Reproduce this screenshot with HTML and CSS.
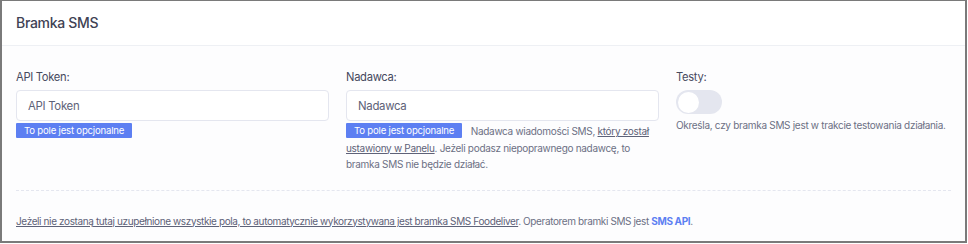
FILE: index.html
```html
<!DOCTYPE html>
<html lang="pl">
<head>
    <meta charset="UTF-8">
    <title>Bramka SMS</title>
    <link rel="stylesheet" href="styles.css">
</head>
<body>
    <div class="card">
        <div class="card-header">
            <h3>Bramka SMS</h3>
        </div>
        <div class="card-body">
            <div class="form-row">
                <div class="form-group">
                    <label>API Token:</label>
                    <input type="text" class="form-control" placeholder="API Token">
                    <div class="form-help">
                        <span class="badge">To pole jest opcjonalne</span>
                    </div>
                </div>
                <div class="form-group">
                    <label>Nadawca:</label>
                    <input type="text" class="form-control" placeholder="Nadawca">
                    <div class="form-help">
                        <span class="badge">To pole jest opcjonalne</span>
                        Nadawca wiadomości SMS, <u>który został ustawiony w Panelu</u>. Jeżeli podasz niepoprawnego nadawcę, to bramka SMS nie będzie działać.
                    </div>
                </div>
                <div class="form-group">
                    <label>Testy:</label>
                    <label class="switch">
                        <input type="checkbox">
                        <span class="knob"></span>
                    </label>
                    <div class="form-help">Określa, czy bramka SMS jest w trakcie testowania działania.</div>
                </div>
            </div>
            <div class="separator"></div>
            <p class="footer-note"><u>Jeżeli nie zostaną tutaj uzupełnione wszystkie pola, to automatycznie wykorzystywana jest bramka SMS Foodeliver</u>. Operatorem bramki SMS jest <a href="#">SMS API</a>.</p>
        </div>
    </div>
</body>
</html>
```

FILE: styles.css
```css
body {
    margin: 0;
    padding: 0;
    background: #fff;
    font-family: Inter, "Open Sans", sans-serif;
    color: #3f4254;
}
.card {
    box-sizing: border-box;
    width: 967px;
    height: 243px;
    border: 2px solid #7a7a7a;
    border-top-width: 1px;
    background: #fdfdfe;
}
.card-header {
    height: 45px;
    background: #fff;
    border-bottom: 1px solid #eef0f4;
    padding: 0 14px 1px;
    box-sizing: border-box;
    display: flex;
    align-items: center;
}
.card-header h3 {
    margin: 0;
    font-size: 14px;
    font-weight: 500;
    letter-spacing: -0.3px;
    color: #3f4254;
}
.card-body {
    padding: 21px 14px 0;
}
.form-row {
    display: grid;
    grid-template-columns: 313px 313px 290px;
    column-gap: 17px;
}
.form-group label {
    display: block;
    font-size: 11.2px;
    letter-spacing: -0.3px;
    line-height: 20px;
    color: #474a5e;
    margin-bottom: 3px;
}
.form-control {
    box-sizing: border-box;
    width: 100%;
    height: 31px;
    border: 1px solid #e4e6ef;
    border-radius: 4px;
    padding: 0 11px;
    font-family: inherit;
    font-size: 11.4px;
    letter-spacing: -0.3px;
    background: #fff;
    outline: none;
}
.form-control::placeholder {
    color: #5e6278;
}
.form-help {
    margin-top: 2px;
    font-size: 10px;
    letter-spacing: -0.3px;
    line-height: 16.5px;
    color: #6c7084;
}
.form-help u {
    color: #5e6278;
}
.badge {
    display: inline-block;
    vertical-align: top;
    background: #5d7ff2;
    color: #fff;
    font-size: 9.6px;
    letter-spacing: -0.2px;
    line-height: 15px;
    padding: 0 8px;
    border-radius: 1px;
    margin-right: 6px;
}
.switch {
    position: relative;
    display: block;
    width: 46px;
    height: 24px;
    margin: 1px 0 3px 0 !important;
}
.switch input {
    opacity: 0;
    width: 0;
    height: 0;
}
.knob {
    position: absolute;
    top: 0;
    left: 0;
    right: 0;
    bottom: 0;
    background: #e4e6ef;
    border-radius: 12px;
}
.knob:before {
    content: "";
    position: absolute;
    left: 2px;
    top: 1.5px;
    width: 21px;
    height: 21px;
    border-radius: 50%;
    background: #fff;
}
.separator {
    margin-top: 17px;
    border-top: 1px dashed #e4e6ef;
}
.footer-note {
    margin: 21px 0 0;
    font-size: 10px;
    letter-spacing: -0.38px;
    line-height: 18px;
    color: #6c7084;
}
.footer-note u {
    color: #5e6278;
}
.footer-note a {
    color: #5d7ff2;
    font-weight: 700;
    text-decoration: none;
}
```
